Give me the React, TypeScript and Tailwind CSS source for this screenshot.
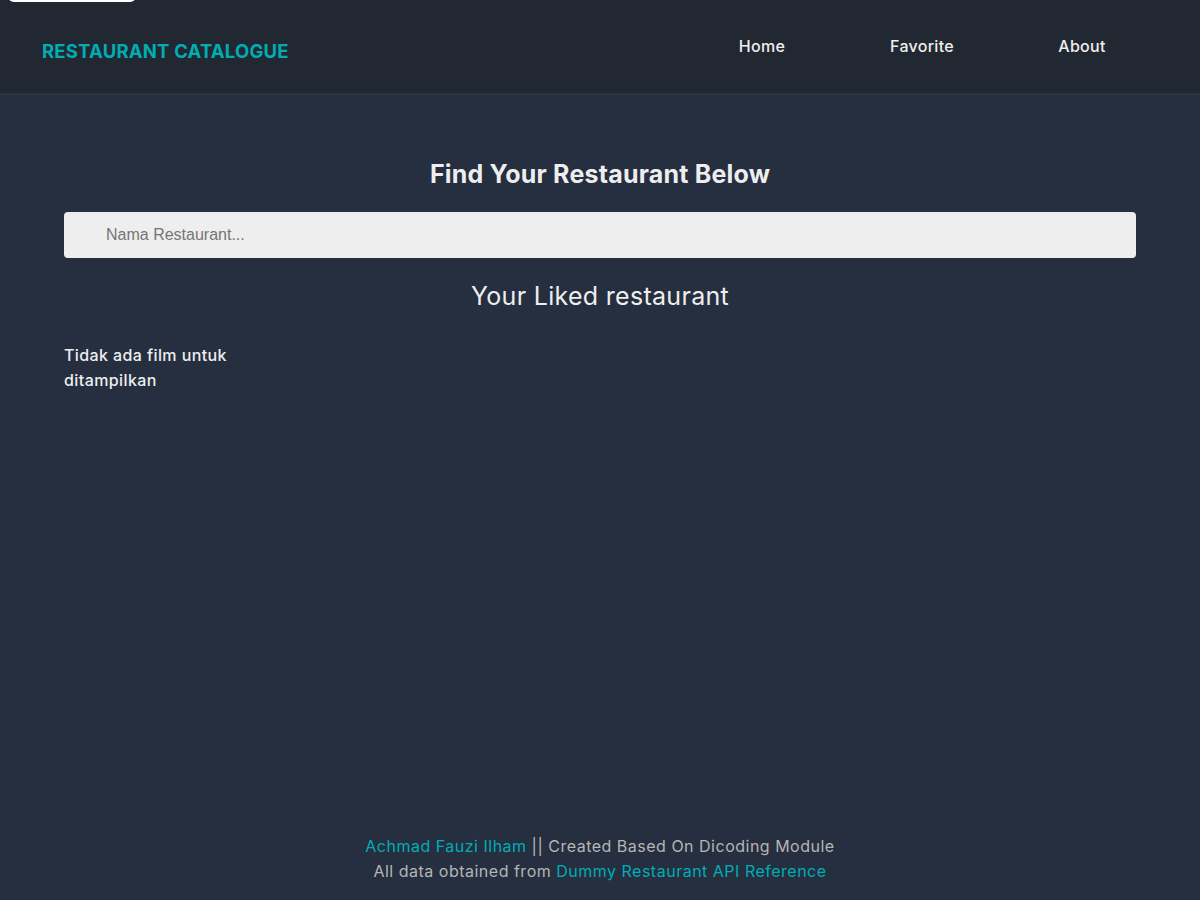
import React from 'react';

const font = { fontFamily: 'Inter, "Noto Sans", sans-serif' };

export default function App() {
  return (
    <div className="min-h-screen flex flex-col bg-[#252f40] text-[#eeeeee]" style={font}>
      <a href="#main" className="absolute top-[-30px] left-2 w-[128px] h-8 bg-white rounded-md"></a>

      <header className="h-[95px] bg-[#222831] border-b-2 border-[#2e3441] flex items-start justify-between pl-[42px] pr-[38px]">
        <h1 className="mt-[38px] text-[18.5px] font-bold tracking-[0.2px] text-[#00adb5]">RESTAURANT CATALOGUE</h1>
        <nav className="flex mt-[34px]">
          <a href="#" className="w-[160px] text-center text-[16px] font-medium tracking-[0.3px]">Home</a>
          <a href="#" className="w-[160px] text-center text-[16px] font-medium tracking-[0.3px]">Favorite</a>
          <a href="#" className="w-[160px] text-center text-[16px] font-medium tracking-[0.3px]">About</a>
        </nav>
      </header>

      <main id="main" className="flex-1 px-16 pt-[63px]">
        <h2 className="text-center text-[25px] font-bold leading-8 tracking-[0.2px]">Find Your Restaurant Below</h2>
        <input
          type="text"
          placeholder="Nama Restaurant..."
          className="mt-[22px] block w-full h-[46px] rounded bg-[#eeeeee] pl-[42px] text-[16px] text-[#333] placeholder:text-[#757575] outline-none"
          style={{ fontFamily: '"Liberation Sans", Arial, sans-serif' }}
        />
        <h2 className="mt-[22px] text-center text-[25px] font-normal leading-8 tracking-[0.3px]">Your Liked restaurant</h2>
        <div className="mt-[31px] grid grid-cols-[200px]">
          <p className="text-[16px] font-medium leading-[25px] tracking-[0.4px]">Tidak ada film untuk ditampilkan</p>
        </div>
      </main>

      <footer className="pb-[16px] text-center text-[16px] leading-[25px] tracking-[0.5px] text-[#b5b5b5]">
        <p>
          <span className="text-[#00adb5]">Achmad Fauzi Ilham</span> || Created Based On Dicoding Module
        </p>
        <p>
          All data obtained from <a href="#" className="text-[#00adb5]">Dummy Restaurant API Reference</a>
        </p>
      </footer>
    </div>
  );
}
